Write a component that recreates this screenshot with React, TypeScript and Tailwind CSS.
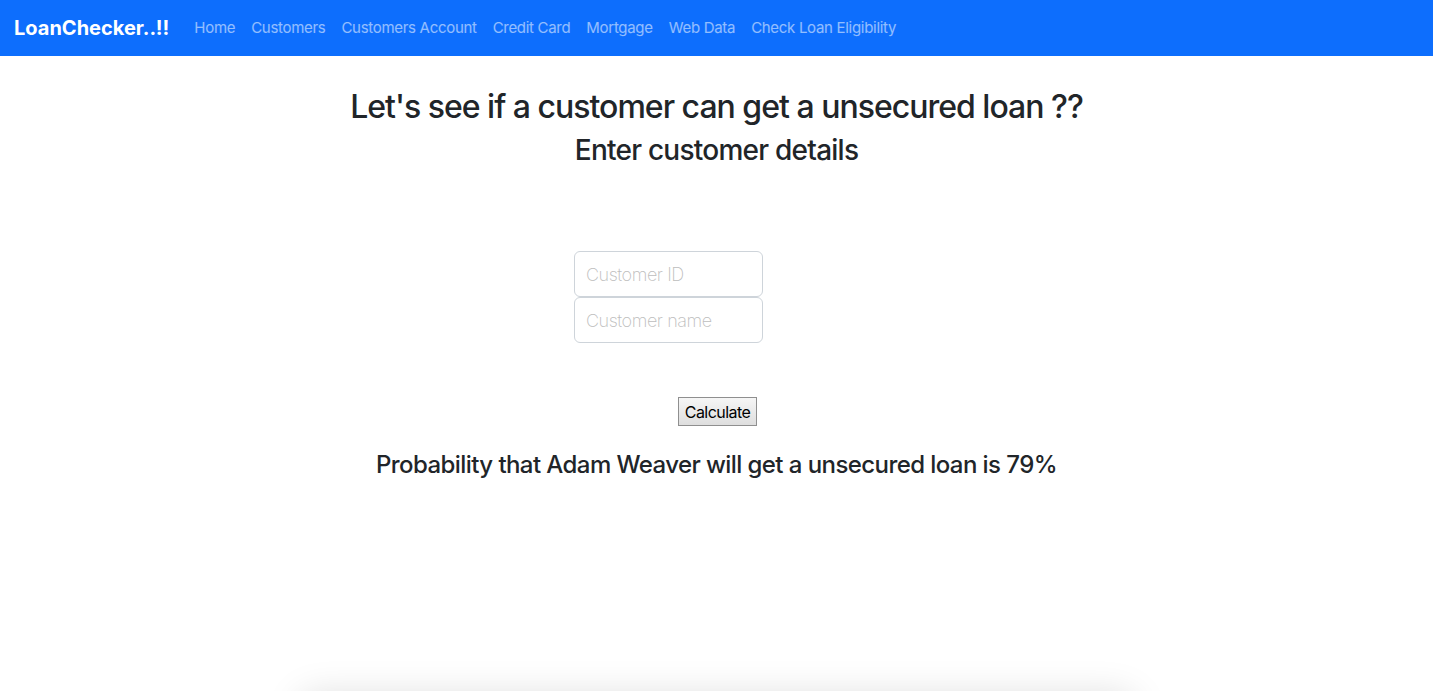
import { useState } from "react";

const links = [
  "Home",
  "Customers",
  "Customers Account",
  "Credit Card",
  "Mortgage",
  "Web Data",
  "Check Loan Eligibility",
];

const NavBar = () => (
  <nav className="flex h-[56px] items-center bg-[#0d6efd] px-[14px]">
    <span className="mr-[17px] text-[20px] font-bold text-white">LoanChecker..!!</span>
    <div className="flex pt-[1px]">
      {links.map((l) => (
        <a key={l} className="px-[8px] text-[15px] tracking-[-0.02em] text-white/55">
          {l}
        </a>
      ))}
    </div>
  </nav>
);

export default function App() {
  const [id, setId] = useState("");
  const [name, setName] = useState("");
  return (
    <div className="h-[691px] overflow-hidden bg-white font-['Inter',sans-serif] text-[#212529]">
      <NavBar />
      <div className="flex flex-col items-center">
        <h2 className="mt-[31px] text-[32px] font-medium leading-[40px] tracking-[-0.031em]">
          Let's see if a customer can get a unsecured loan ??
        </h2>
        <h3 className="mt-[6px] text-[28px] font-medium leading-[34px] tracking-[-0.027em]">
          Enter customer details
        </h3>

        <div className="mr-[96px] mt-[84px] flex flex-col">
          <input
            value={id}
            onChange={(e) => setId(e.target.value)}
            placeholder="Customer ID"
            className="h-[46px] w-[189px] rounded-[6px] border border-[#ced4da] px-[11px] text-[18px] font-extralight tracking-[-0.025em] placeholder:text-[#bdbdbd]"
          />
          <input
            value={name}
            onChange={(e) => setName(e.target.value)}
            placeholder="Customer name"
            className="h-[46px] w-[189px] rounded-[6px] border border-[#ced4da] px-[11px] text-[18px] font-extralight tracking-[-0.025em] placeholder:text-[#bdbdbd]"
          />
        </div>

        <button className="ml-[2px] mt-[54px] h-[29px] border border-[#8f8f8f] bg-gradient-to-b from-[#f6f6f6] to-[#dedede] px-[6px] text-[16px] tracking-[-0.035em] text-black">
          Calculate
        </button>

        <h4 className="mt-[24px] text-[24px] font-medium leading-[30px] tracking-[-0.024em]">
          Probability that Adam Weaver will get a unsecured loan is 79%
        </h4>

        <div className="mt-[222px] h-[60px] w-[820px] shrink-0 rounded-[8px] bg-white shadow-[0_0_36px_8px_rgba(0,0,0,0.13)]" />
      </div>
    </div>
  );
}
